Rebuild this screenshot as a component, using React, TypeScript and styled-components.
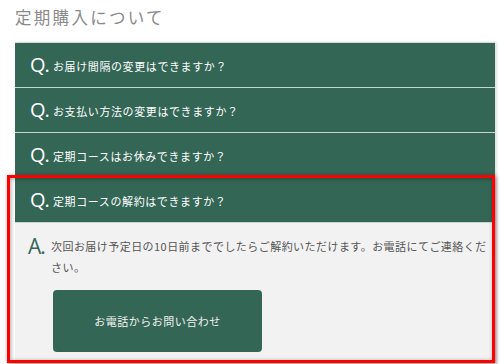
import React from "react";
import styled, { createGlobalStyle } from "styled-components";

const GREEN = "#346656";

const Global = createGlobalStyle`
  html, body { margin: 0; padding: 0; background: #ffffff; }
  body { font-family: "Noto Sans CJK JP", "Noto Sans", sans-serif; }
`;

const Page = styled.div`
  position: relative;
  width: 500px;
  height: 364px;
  overflow: hidden;
  padding: 0 5px 0 15px;
  box-sizing: border-box;
`;

const Title = styled.h2`
  margin: 0;
  padding-top: 3px;
  height: 42px;
  box-sizing: border-box;
  font-size: 16.5px;
  font-weight: 400;
  line-height: 28px;
  letter-spacing: 2.3px;
  color: #8a8a8a;
  font-family: "Noto Sans CJK JP", sans-serif;
`;

const Accordion = styled.div`
  border-top: 1px solid #d7dcda;
  box-shadow: 2px 0 2px rgba(0, 0, 0, 0.12);
`;

const Item = styled.div``;

const Question = styled.div`
  display: flex;
  align-items: center;
  height: 44px;
  padding-left: 15px;
  background: ${GREEN};
  border-bottom: 1px solid #c6d5cf;
  color: #ffffff;
`;

const Mark = styled.span<{ $color: string; $size: number }>`
  font-family: "Open Sans", "Liberation Sans", sans-serif;
  font-size: ${(p) => p.$size}px;
  color: ${(p) => p.$color};
  width: 23px;
  flex-shrink: 0;
  line-height: 1;
  letter-spacing: -1px;
`;

const QText = styled.span`
  font-size: 11px;
  letter-spacing: 0.6px;
  line-height: 1;
  padding-top: 2px;
`;

const Answer = styled.div`
  background: #f2f2f2;
  padding: 13px 6px 14px 13px;
`;

const AnswerRow = styled.div`
  display: flex;
  align-items: flex-start;
`;

const AText = styled.p`
  margin: 0;
  font-size: 11px;
  letter-spacing: 0.45px;
  line-height: 21px;
  color: #555555;
`;

const Button = styled.a`
  display: flex;
  align-items: center;
  justify-content: center;
  margin: 12px 0 0 25px;
  width: 209px;
  height: 62px;
  border-radius: 4px;
  background: ${GREEN};
  color: #f2f2f2;
  font-size: 11px;
  letter-spacing: 0.5px;
  text-decoration: none;
`;

const Highlight = styled.div`
  position: absolute;
  left: 7px;
  top: 175px;
  width: 488px;
  height: 188px;
  box-sizing: border-box;
  border: 3px solid #ff0000;
  box-shadow: 1px 1px 4px rgba(0, 0, 0, 0.45), inset 1px 1px 4px rgba(0, 0, 0, 0.35);
  pointer-events: none;
`;

const questions = [
  "お届け間隔の変更はできますか？",
  "お支払い方法の変更はできますか？",
  "定期コースはお休みできますか？",
  "定期コースの解約はできますか？",
];

export default function App() {
  return (
    <>
      <Global />
      <Page>
        <Title>定期購入について</Title>
        <Accordion>
          {questions.map((q, i) => (
            <Item key={q}>
              <Question>
                <Mark $color="#ffffff" $size={20}>Q.</Mark>
                <QText>{q}</QText>
              </Question>
              {i === questions.length - 1 && (
                <Answer>
                  <AnswerRow>
                    <Mark $color={GREEN} $size={21}>A.</Mark>
                    <AText>
                      次回お届け予定日の10日前まででしたらご解約いただけます。お電話にてご連絡ください。
                    </AText>
                  </AnswerRow>
                  <Button href="#">お電話からお問い合わせ</Button>
                </Answer>
              )}
            </Item>
          ))}
        </Accordion>
        <Highlight />
      </Page>
    </>
  );
}
